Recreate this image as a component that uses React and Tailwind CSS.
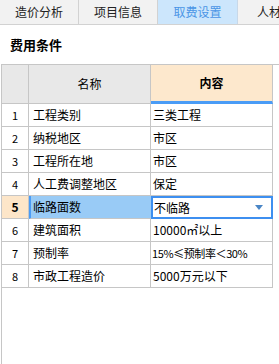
import React from "react";

const tabs = ["造价分析", "项目信息", "取费设置", "人材机汇总"];

const rows = [
  { no: 1, name: "工程类别", value: "三类工程" },
  { no: 2, name: "纳税地区", value: "市区" },
  { no: 3, name: "工程所在地", value: "市区" },
  { no: 4, name: "人工费调整地区", value: "保定" },
  { no: 5, name: "临路面数", value: "不临路", active: true },
  { no: 6, name: "建筑面积", value: "10000㎡以上" },
  { no: 7, name: "预制率", value: "15%≤预制率＜30%" },
  { no: 8, name: "市政工程造价", value: "5000万元以下" },
];

const App = () => {
  return (
    <div
      className="w-[279px] h-[364px] overflow-hidden bg-white flex flex-col text-black"
      style={{ fontFamily: '"Noto Sans CJK SC", "Noto Sans", sans-serif' }}
    >
      {/* 页签 */}
      <div className="flex h-[25px] shrink-0 bg-[#f2f2f2] border-b border-[#d2d2d2]">
        {tabs.map((t, i) => (
          <div
            key={t}
            className={
              i === 2
                ? "w-[80px] shrink-0 flex items-center justify-center text-[12px] bg-[#cce6fc] text-[#4a95e6] border-r border-[#c8d8e8]"
                : "w-[79px] shrink-0 flex items-center justify-center text-[12px] text-[#222] border-r border-[#d2d2d2]"
            }
          >
            <span className={i === 3 ? "pl-[20px] whitespace-nowrap" : ""}>{t}</span>
          </div>
        ))}
      </div>

      {/* 标题 */}
      <div className="h-[39px] shrink-0 flex items-center pl-[10px] text-[13px] font-bold">
        费用条件
      </div>

      {/* 表格 */}
      <div className="flex-1 ml-[1px] border-l border-t border-[#c6c6c6]">
        <div className="grid grid-cols-[27px_122px_122px] h-[39px]">
          <div className="bg-[#e8e8e8] border-r border-b border-[#c6c6c6]" />
          <div className="bg-[#e8e8e8] border-r border-b border-[#c6c6c6] flex items-center justify-center text-[12px]">
            名称
          </div>
          <div className="bg-[#fde8cd] border-r border-[#c6c6c6] border-b-[3px] border-b-[#4a9cf6] flex items-center justify-center text-[12px] font-bold">
            内容
          </div>
        </div>
        {rows.map((r) => (
          <div key={r.no} className="grid grid-cols-[27px_122px_122px] h-[23px]">
            <div
              className={
                r.active
                  ? "bg-[#fde6c9] border-r border-b border-[#c6c6c6] flex items-center justify-center text-[12px] font-bold"
                  : "border-r border-b border-[#c6c6c6] flex items-center justify-center text-[11px]"
              }
            >
              {r.no}
            </div>
            <div
              className={
                r.active
                  ? "bg-[#99cbf6] border-l-2 border-l-[#4a9cf6] border-b border-[#c6c6c6] flex items-center pl-[2px] text-[12px] whitespace-nowrap"
                  : "border-r border-b border-[#c6c6c6] flex items-center pl-[4px] text-[12px] whitespace-nowrap"
              }
            >
              {r.name}
            </div>
            {r.active ? (
              <div className="border-2 border-[#3d8ff0] flex items-center justify-between pl-[1px] pr-[8px] text-[12px]">
                <span>{r.value}</span>
                <svg width="8" height="5" viewBox="0 0 8 5">
                  <path d="M0 0 L8 0 L4 5 Z" fill="#4a86c6" />
                </svg>
              </div>
            ) : (
              <div
                className={
                  r.no === 7
                    ? "border-r border-b border-[#c6c6c6] flex items-center pl-[1px] text-[11px] tracking-[-0.4px] whitespace-nowrap overflow-hidden"
                    : "border-r border-b border-[#c6c6c6] flex items-center pl-[2px] text-[12px] whitespace-nowrap"
                }
              >
                {r.value}
              </div>
            )}
          </div>
        ))}
      </div>
    </div>
  );
};

export default App;
